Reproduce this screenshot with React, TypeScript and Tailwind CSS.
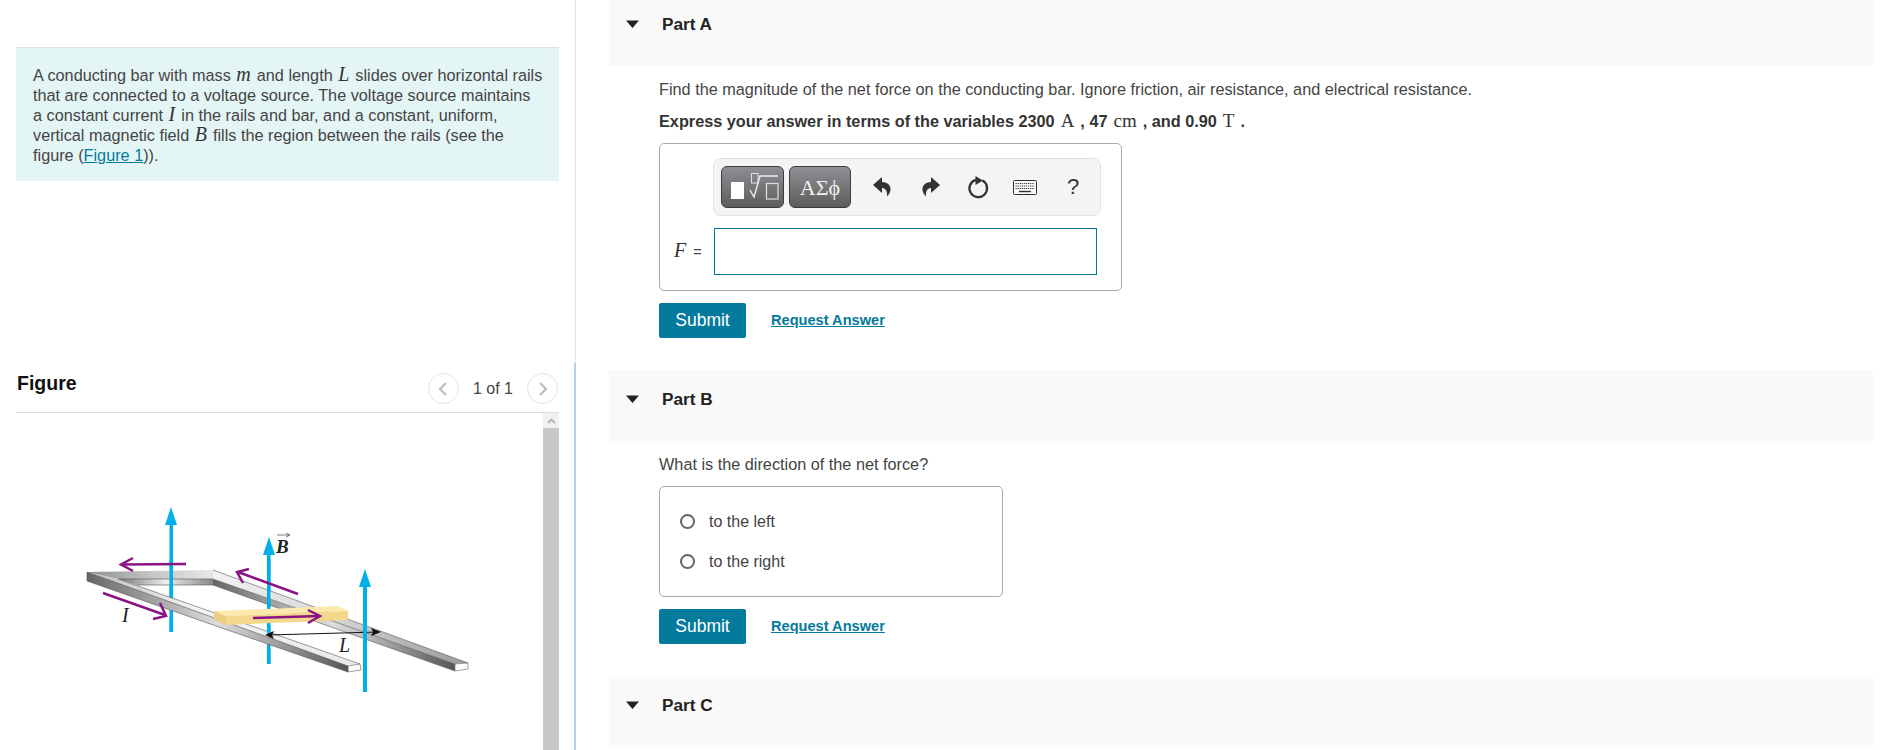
import React from "react";

const mathCls = "[font-family:'Liberation_Serif',serif] italic text-[20px] leading-[0] text-[#333] ml-[1px] mr-[1.5px]";
const uprightCls = "[font-family:'Liberation_Serif',serif] text-[19px] font-normal leading-[0] text-[#333] mx-[1.5px]";

function Triangle() {
  return (
    <svg width="13" height="8" viewBox="0 0 13 8" className="shrink-0">
      <path d="M0 0.5H13L6.5 8Z" fill="#222" />
    </svg>
  );
}

function PartBar({ label, cls }: { label: string; cls: string }) {
  return (
    <div className={"flex bg-[#f9f9f9] pl-[17px] " + cls}>
      <div className="flex h-5 items-center">
        <Triangle />
      </div>
      <h2 className="ml-[23px] text-[17.2px] font-bold leading-5 text-[#222]">{label}</h2>
    </div>
  );
}

function SubmitRow({ cls }: { cls: string }) {
  return (
    <div className={"flex items-center " + cls}>
      <button className="h-[35px] w-[87px] rounded-[2px] bg-[#047a9c] text-[17.5px] text-white">Submit</button>
      <a className="ml-[25px] text-[14.6px] font-bold text-[#047a9c] underline">Request Answer</a>
    </div>
  );
}

function Figure() {
  return (
    <svg width="527" height="336" viewBox="16 414 527 336" className="block">
      <defs>
        <linearGradient id="top" x1="0" x2="1" y1="0" y2="0">
          <stop offset="0" stopColor="#8c8c8c" />
          <stop offset="0.5" stopColor="#c4c4c4" />
          <stop offset="1" stopColor="#e8e8e8" />
        </linearGradient>
        <linearGradient id="face" x1="0" x2="1" y1="0" y2="0">
          <stop offset="0" stopColor="#777" />
          <stop offset="0.5" stopColor="#eee" />
          <stop offset="1" stopColor="#888" />
        </linearGradient>
        <linearGradient id="rtop" x1="0" x2="1" y1="0" y2="0">
          <stop offset="0" stopColor="#f2f2f2" />
          <stop offset="0.45" stopColor="#d8d8d8" />
          <stop offset="1" stopColor="#9a9a9a" />
        </linearGradient>
        <linearGradient id="ltop" x1="0" x2="1" y1="0" y2="0">
          <stop offset="0" stopColor="#bbb" />
          <stop offset="0.4" stopColor="#f5f5f5" />
          <stop offset="1" stopColor="#e8e8e8" />
        </linearGradient>
        <linearGradient id="lface" x1="0" x2="1" y1="0" y2="0">
          <stop offset="0" stopColor="#666" />
          <stop offset="0.5" stopColor="#ddd" />
          <stop offset="1" stopColor="#555" />
        </linearGradient>
      </defs>

      <g fill="#00b0ea">
        <rect x="169.5" y="524" width="3.5" height="109" />
        <path d="M171 508L177 526H165Z" />
        <rect x="267" y="554" width="3.5" height="111" />
        <path d="M269 538L275 556H263Z" />
      </g>

      <polygon points="213,580 455,665 455,672 213,586" fill="url(#lface)" />
      <polygon points="213,571 468,664 455,665 213,580" fill="url(#rtop)" />
      <polygon points="455,665 468,664 468,670 455,672" fill="#fff" stroke="#777" strokeWidth="0.7" />
      <polygon points="118,580 213,580 213,586 137,586" fill="url(#face)" />
      <polygon points="87,573 213,571 213,580 118,580" fill="url(#top)" />
      <path d="M213 571L468 664M213 580L455 665M213 586L455 672M118 580L213 580M137 586H213" stroke="#555" strokeWidth="0.6" fill="none" />

      <rect x="169.5" y="560" width="3.5" height="38" fill="#00b0ea" />
      <rect x="267" y="560" width="3.5" height="48" fill="#00b0ea" />

      <polygon points="118,580 360,665 348,667 87,573" fill="url(#ltop)" />
      <polygon points="87,573 348,667 348,673 87,582" fill="url(#lface)" />
      <polygon points="348,667 360,665 361,671 348,673" fill="#fff" stroke="#777" strokeWidth="0.7" />
      <path d="M87 573L348 667L348 673L87 582ZM118 580L360 665" stroke="#555" strokeWidth="0.6" fill="none" />

      <rect x="169.5" y="618" width="3.5" height="15" fill="#00b0ea" />
      <rect x="267" y="650" width="3.5" height="15" fill="#00b0ea" />

      <polygon points="214,612 338,607 348,612 226,617" fill="#fbe9ae" />
      <polygon points="226,617 348,612 348,621 226,626" fill="#f3d88c" />
      <polygon points="214,612 226,617 226,626 214,621" fill="#e9cd86" />

      <rect x="267" y="626" width="3.5" height="9" fill="#00b0ea" />

      <path d="M268 636L378 633" stroke="#111" strokeWidth="1" />
      <path d="M265 636L274 632L272 636L274 640Z" fill="#111" />
      <path d="M381 633L371 629L373 633L371 637Z" fill="#111" />

      <rect x="363" y="586" width="4" height="107" fill="#00b0ea" />
      <path d="M365 570L371 588H359Z" fill="#00b0ea" />

      <g stroke="#8a1384" strokeWidth="2.5" fill="none">
        <path d="M186 565L122 565.5" />
        <path d="M133 559L121 565.5L133 572" />
        <path d="M298 595L238 573" />
        <path d="M249 570L237 573L243 584" />
        <path d="M103 594L165 616" />
        <path d="M160 604L166 617L153 620" />
        <path d="M253 619L319 617" />
        <path d="M308 611L320 617L308 624" />
      </g>

      <g fontFamily="'Liberation Serif', serif" fontStyle="italic" fill="#222">
        <text x="122" y="623" fontSize="20">I</text>
        <text x="339" y="653" fontSize="20">L</text>
        <text x="276" y="554" fontSize="19" fontWeight="bold">B</text>
      </g>
      <path d="M277 536H289M286 534L290 536L286 538" stroke="#555" strokeWidth="0.8" fill="none" />
    </svg>
  );
}

function Chevron({ dir }: { dir: "l" | "r" }) {
  return (
    <span className="flex h-[31px] w-[31px] items-center justify-center rounded-full border border-[#e3e3e3]">
      <svg width="10" height="16" viewBox="0 0 10 16" fill="none" stroke="#bdbdbd" strokeWidth="2.2">
        <path d={dir === "l" ? "M8 2L2 8L8 14" : "M2 2L8 8L2 14"} />
      </svg>
    </span>
  );
}

function Toolbar() {
  const btn =
    "h-[42px] rounded-[6px] border border-[#3d3d3d] bg-linear-to-b from-[#908e94] to-[#5e5e5e] flex items-center justify-center";
  return (
    <div className="ml-[53px] mt-[14px] flex h-[58px] w-[388px] items-center rounded-[8px] border border-[#e2e2e2] bg-[#f4f4f4] pl-[7px]">
      <button className={btn + " w-[63px]"}>
        <svg width="63" height="42" viewBox="0 0 63 42" fill="none" className="shrink-0">
          <rect x="10" y="16" width="13" height="17" fill="#fff" />
          <rect x="30.5" y="7.5" width="6.5" height="9.5" stroke="#e0e0e0" strokeWidth="1" />
          <path d="M29 24L33 31L39 10H57" stroke="#eee" strokeWidth="1.4" />
          <rect x="45.5" y="17.5" width="11.5" height="15.5" stroke="#e0e0e0" strokeWidth="1.2" />
        </svg>
      </button>
      <button className={btn + " ml-[5px] w-[62px] text-[22px] text-[#f0f0f0] [font-family:'Liberation_Serif',serif]"}>ΑΣϕ</button>
      <svg width="18" height="20" viewBox="0 0 18 20" className="ml-[22px]" fill="#333">
        <path d="M0 8L9 0V5C15 5 18 9 17.5 13C17.2 16 15.5 18 14 19.5C14.5 15 13 11 9 11V16Z" />
      </svg>
      <svg width="18" height="20" viewBox="0 0 18 20" className="ml-[31px]" fill="#333">
        <path d="M18 8L9 0V5C3 5 0 9 0.5 13C0.8 16 2.5 18 4 19.5C3.5 15 5 11 9 11V16Z" />
      </svg>
      <svg width="22" height="24" viewBox="0 0 22 24" className="ml-[27px]" fill="none">
        <path d="M9 4.8A8.8 8.8 0 1 0 15.5 5.6" stroke="#333" strokeWidth="2.3" />
        <path d="M8.5 1L16 5.5L8.5 10Z" fill="#333" />
      </svg>
      <svg width="24" height="15" viewBox="0 0 24 15" className="ml-[24px]" fill="none">
        <rect x="0.5" y="0.5" width="23" height="14" rx="1" fill="#f8f8f8" stroke="#333" />
        <path d="M2.5 3.5H21.5M2.5 6H21.5M2.5 8.5H21.5" stroke="#333" strokeWidth="1.2" strokeDasharray="1.2 0.9" />
        <path d="M6 11.5H18" stroke="#333" strokeWidth="1.4" />
      </svg>
      <span className="ml-[30px] text-[22px] leading-none text-[#333]">?</span>
    </div>
  );
}

function Radio({ label, cls }: { label: string; cls: string }) {
  return (
    <div className={"flex h-5 items-center " + cls}>
      <span className="ml-[20px] h-[15px] w-[15px] rounded-full border-2 border-[#666] bg-white" />
      <span className="ml-[14px] mt-[1px] text-[16px] text-[#444]">{label}</span>
    </div>
  );
}

export default function App() {
  return (
    <div className="flex h-[750px] w-[1894px] overflow-hidden bg-white text-[16px] text-[#444] [font-family:'Liberation_Sans',Arial,sans-serif]">
      <div className="w-[574px] shrink-0 pl-4 pt-[47px]">
        <div className="h-[134px] w-[543px] whitespace-nowrap border-t border-[#d5e3e8] bg-[#e4f5f6] pl-[17px] pt-[17px] text-[16.25px] leading-5 text-[#444]">
          <p>
            A conducting bar with mass <span className={mathCls}>m</span> and length <span className={mathCls}>L</span> slides over horizontal rails
            <br />
            that are connected to a voltage source. The voltage source maintains
            <br />
            a constant current <span className={mathCls}>I</span> in the rails and bar, and a constant, uniform,
            <br />
            vertical magnetic field <span className={mathCls}>B</span> fills the region between the rails (see the
            <br />
            figure (<a className="text-[#047a9c] underline">Figure 1</a>)).
          </p>
        </div>

        <div className="mt-[190px] flex h-[42px] w-[543px] items-start border-b border-[#dcdcdc]">
          <h2 className="ml-[1px] text-[19.5px] font-bold leading-6 text-[#111]">Figure</h2>
          <div className="ml-auto mr-[1px] mt-[2px] flex items-center">
            <Chevron dir="l" />
            <span className="ml-[14px] mr-[14px] text-[16px] text-[#444]">1 of 1</span>
            <Chevron dir="r" />
          </div>
        </div>

        <div className="flex h-[400px] w-[543px]">
          <Figure />
          <div className="w-[16px] shrink-0 bg-[#c8c8c8]">
            <div className="flex h-[15px] items-center justify-center bg-[#f1f1f1]">
              <svg width="9" height="6" viewBox="0 0 9 6" fill="none" stroke="#b0b0b0" strokeWidth="1.8">
                <path d="M1 5L4.5 1.5L8 5" />
              </svg>
            </div>
          </div>
        </div>
      </div>

      <div className="flex w-[2px] shrink-0 flex-col">
        <div className="h-[363px] border-r border-[#dde5ee]" />
        <div className="flex-1 bg-[#b7cfe4]" />
      </div>

      <div className="ml-[33px] w-[1264px] shrink-0">
        <PartBar label="Part A" cls="h-[66px] pt-[14px]" />
        <div className="pl-[50px]">
          <p className="mt-[13px] text-[16.25px] leading-5 text-[#444]">
            Find the magnitude of the net force on the conducting bar. Ignore friction, air resistance, and electrical resistance.
          </p>
          <p className="mt-[12px] text-[16.25px] font-bold leading-5 text-[#333]">
            Express your answer in terms of the variables 2300 <span className={uprightCls}>A</span> , 47 <span className={uprightCls}>cm</span> , and 0.90 <span className={uprightCls}>T</span> .
          </p>

          <div className="mt-[12px] h-[148px] w-[463px] rounded-[5px] border border-[#aaa] bg-white">
            <Toolbar />
            <div className="mt-[12px] flex items-center">
              <span className="ml-[14px] mb-[4px] w-[40px] whitespace-nowrap leading-none">
                <span className="[font-family:'Liberation_Serif',serif] text-[20px] italic text-[#333]">F</span>
                <span className="ml-[7px] text-[14.5px] text-[#444]">=</span>
              </span>
              <div className="h-[47px] w-[383px] border border-[#047a9c] bg-white" />
            </div>
          </div>

          <SubmitRow cls="mt-[12px]" />
        </div>

        <div className="h-[32px]" />
        <PartBar label="Part B" cls="h-[71px] pt-[19px]" />
        <div className="pl-[50px]">
          <p className="mt-[13px] text-[16.25px] leading-5 text-[#444]">What is the direction of the net force?</p>
          <div className="mt-[12px] h-[111px] w-[344px] rounded-[5px] border border-[#aaa] pt-[24px]">
            <Radio label="to the left" cls="" />
            <Radio label="to the right" cls="mt-[20px]" />
          </div>
          <SubmitRow cls="mt-[12px]" />
        </div>

        <div className="h-[33px]" />
        <PartBar label="Part C" cls="h-[70px] pt-[18px]" />
      </div>
    </div>
  );
}
